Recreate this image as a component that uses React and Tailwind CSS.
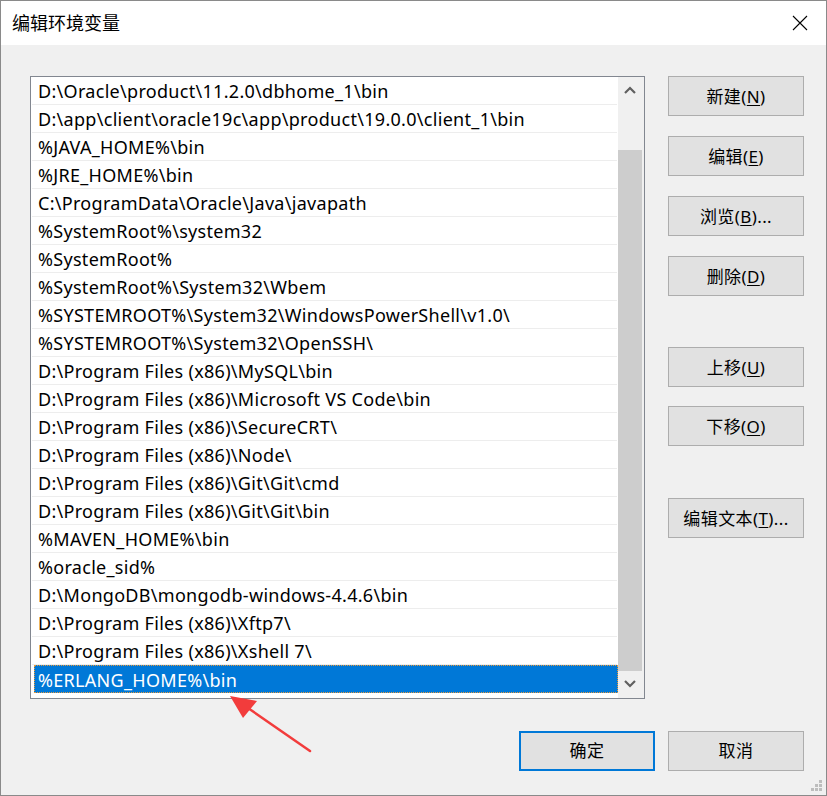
import React from "react";

const paths = [
  "D:\\Oracle\\product\\11.2.0\\dbhome_1\\bin",
  "D:\\app\\client\\oracle19c\\app\\product\\19.0.0\\client_1\\bin",
  "%JAVA_HOME%\\bin",
  "%JRE_HOME%\\bin",
  "C:\\ProgramData\\Oracle\\Java\\javapath",
  "%SystemRoot%\\system32",
  "%SystemRoot%",
  "%SystemRoot%\\System32\\Wbem",
  "%SYSTEMROOT%\\System32\\WindowsPowerShell\\v1.0\\",
  "%SYSTEMROOT%\\System32\\OpenSSH\\",
  "D:\\Program Files (x86)\\MySQL\\bin",
  "D:\\Program Files (x86)\\Microsoft VS Code\\bin",
  "D:\\Program Files (x86)\\SecureCRT\\",
  "D:\\Program Files (x86)\\Node\\",
  "D:\\Program Files (x86)\\Git\\Git\\cmd",
  "D:\\Program Files (x86)\\Git\\Git\\bin",
  "%MAVEN_HOME%\\bin",
  "%oracle_sid%",
  "D:\\MongoDB\\mongodb-windows-4.4.6\\bin",
  "D:\\Program Files (x86)\\Xftp7\\",
  "D:\\Program Files (x86)\\Xshell 7\\",
  "%ERLANG_HOME%\\bin",
];

const font = { fontFamily: '"Noto Sans", "Noto Sans CJK SC", sans-serif' };

const SideButton = ({ label, hotkey, suffix = "", className = "" }) => (
  <button
    className={`w-[136px] h-[40px] bg-[#e1e1e1] border border-[#adadad] text-[17px] tracking-[0.4px] text-black flex items-center justify-center pt-[1px] ${className}`}
  >
    {label}(<span className="underline underline-offset-2">{hotkey}</span>){suffix}
  </button>
);

const Chevron = ({ down }) => (
  <svg width="12" height="8" viewBox="0 0 12 8" className={down ? "rotate-180" : ""}>
    <polyline points="1,7 6,2 11,7" fill="none" stroke="#606060" strokeWidth="2.2" />
  </svg>
);

export default function App() {
  const last = paths.length - 1;

  return (
    <div className="w-[827px] h-[796px] relative bg-[#f0f0f0] border border-[#8a8a8a] flex flex-col" style={font}>
      {/* Title bar */}
      <div className="h-[44px] bg-white flex items-center justify-between pl-[11px] pr-[18px]">
        <span className="text-[18px] text-black">编辑环境变量</span>
        <svg width="16" height="16" viewBox="0 0 16 16">
          <path d="M1 1 L15 15 M15 1 L1 15" stroke="#000" strokeWidth="1.1" />
        </svg>
      </div>

      {/* Body */}
      <div className="flex pl-[29px] pt-[31px]">
        <div className="w-[615px] h-[623px] border border-[#828790] bg-white flex">
          <div className="flex-1 flex flex-col">
            {paths.map((p, i) =>
              i === last ? (
                <div
                  key={p}
                  className="h-[28px] ml-[3px] bg-[#0078d7] text-white text-[18px] tracking-[0.3px] pl-[3px] pt-[2px] flex items-center border border-dotted border-[#e89a3c] whitespace-nowrap"
                >
                  {p}
                </div>
              ) : (
                <div
                  key={p}
                  className="h-[28px] mx-[1px] border-b border-[#ededed] text-[18px] tracking-[0.3px] text-black pl-[6px] pt-[2px] flex items-center whitespace-nowrap"
                >
                  {p}
                </div>
              )
            )}
          </div>
          {/* Scrollbar */}
          <div className="w-[26px] pr-[2px] bg-[#f0f0f0] flex flex-col">
            <div className="h-[26px] flex items-center justify-center">
              <Chevron />
            </div>
            <div className="h-[47px]" />
            <div className="h-[521px] bg-[#cdcdcd]" />
            <div className="h-[26px] flex items-center justify-center">
              <Chevron down />
            </div>
          </div>
        </div>

        <div className="ml-[23px] flex flex-col">
          <SideButton label="新建" hotkey="N" />
          <SideButton label="编辑" hotkey="E" className="mt-[20px]" />
          <SideButton label="浏览" hotkey="B" suffix="..." className="mt-[20px]" />
          <SideButton label="删除" hotkey="D" className="mt-[20px]" />
          <SideButton label="上移" hotkey="U" className="mt-[51px]" />
          <SideButton label="下移" hotkey="O" className="mt-[19px]" />
          <SideButton label="编辑文本" hotkey="T" suffix="..." className="mt-[52px]" />
        </div>
      </div>

      {/* Footer buttons */}
      <div className="flex justify-end gap-[13px] pr-[22px] mt-[32px]">
        <button className="w-[136px] h-[40px] bg-[#e1e1e1] border-2 border-[#0078d7] text-[17px] tracking-[0.4px] text-black">
          确定
        </button>
        <button className="w-[136px] h-[40px] bg-[#e1e1e1] border border-[#adadad] text-[17px] tracking-[0.4px] text-black">
          取消
        </button>
      </div>

      {/* Resize grip */}
      <svg width="12" height="12" viewBox="0 0 12 12" className="absolute right-[3px] bottom-[3px]">
        <g fill="#bdbdbd">
          <rect x="8" y="0" width="3" height="3" />
          <rect x="4" y="4" width="3" height="3" />
          <rect x="8" y="4" width="3" height="3" />
          <rect x="0" y="8" width="3" height="3" />
          <rect x="4" y="8" width="3" height="3" />
          <rect x="8" y="8" width="3" height="3" />
        </g>
      </svg>

      {/* Red annotation arrow */}
      <svg width="100" height="70" viewBox="0 0 100 70" className="absolute left-[223px] top-[691px]">
        <path d="M86 59 L24 16" stroke="#f23c3c" strokeWidth="2.5" strokeLinecap="round" />
        <path d="M6 4 L33 9 L19 26 Z" fill="#f23c3c" />
      </svg>
    </div>
  );
}
